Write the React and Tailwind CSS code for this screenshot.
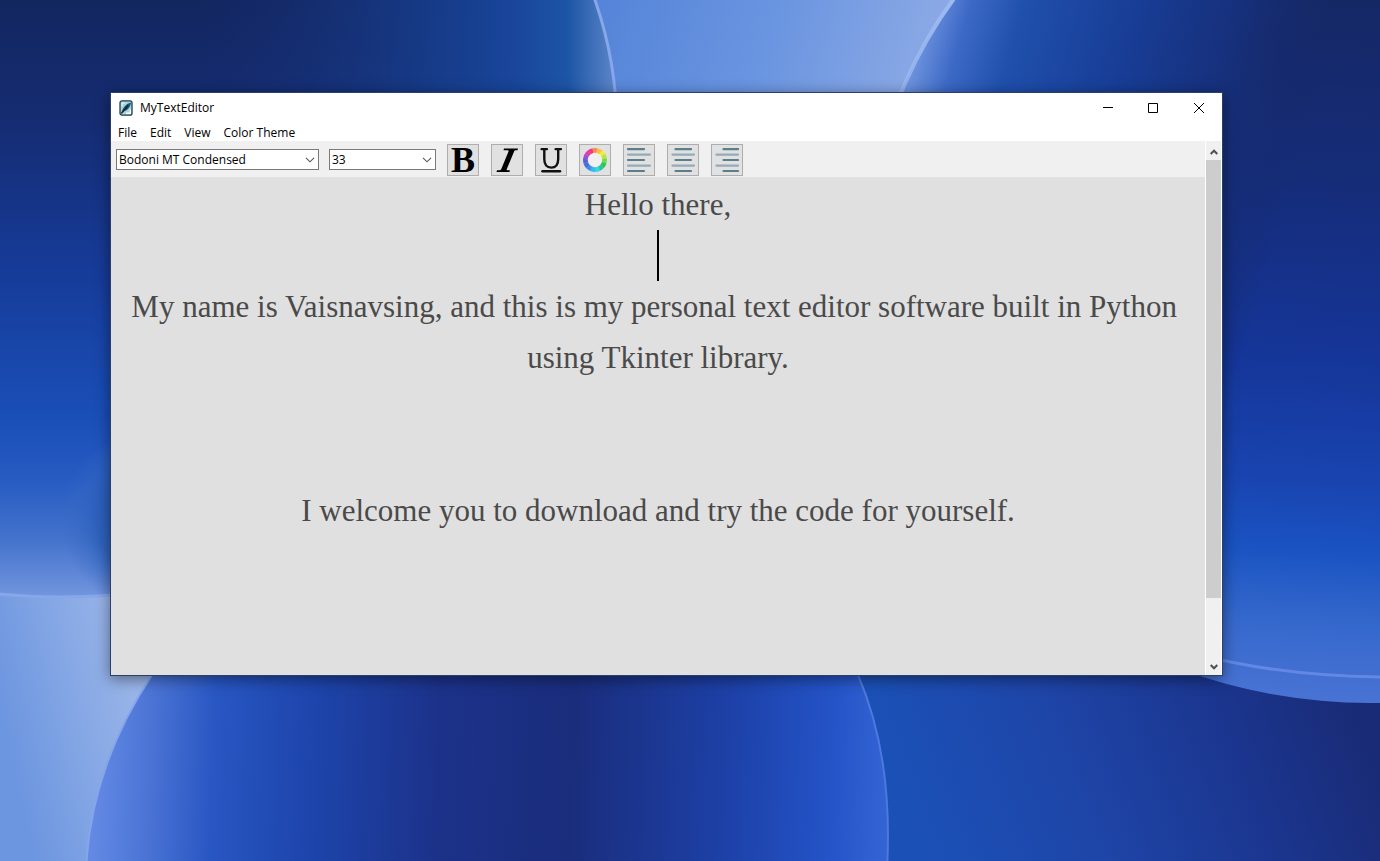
import { useState } from "react";

function Wallpaper() {
  return (
    <svg aria-hidden="true" className="absolute inset-0 h-full w-full" viewBox="0 0 1380 861" preserveAspectRatio="xMidYMid slice">
      <defs>
        <linearGradient id="sky" gradientUnits="userSpaceOnUse" x1="600" y1="0" x2="920" y2="100">
          <stop offset="0" stopColor="#5584d8" />
          <stop offset="0.5" stopColor="#6994e0" />
          <stop offset="1" stopColor="#8ba9e5" />
        </linearGradient>
        <linearGradient id="leftSky" gradientUnits="userSpaceOnUse" x1="0" y1="710" x2="130" y2="680">
          <stop offset="0" stopColor="#6c96e0" />
          <stop offset="1" stopColor="#98b4e8" />
        </linearGradient>
        <linearGradient id="ground" gradientUnits="userSpaceOnUse" x1="930" y1="850" x2="1350" y2="690">
          <stop offset="0" stopColor="#1b50b6" />
          <stop offset="0.35" stopColor="#1e45a8" />
          <stop offset="0.7" stopColor="#1b3690" />
          <stop offset="1" stopColor="#192b76" />
        </linearGradient>
        <linearGradient id="orbLeft" x1="0" y1="0" x2="0" y2="598" gradientUnits="userSpaceOnUse">
          <stop offset="0" stopColor="#12265f" />
          <stop offset="0.2" stopColor="#152c72" />
          <stop offset="0.45" stopColor="#163b98" />
          <stop offset="0.7" stopColor="#1a4fb8" />
          <stop offset="0.8" stopColor="#275bc2" />
          <stop offset="0.9" stopColor="#4372cc" />
          <stop offset="1" stopColor="#7396de" />
        </linearGradient>
        <linearGradient id="orbLeftSide" x1="200" y1="0" x2="618" y2="0" gradientUnits="userSpaceOnUse">
          <stop offset="0" stopColor="#182f76" stopOpacity="0" />
          <stop offset="0.5" stopColor="#163a86" stopOpacity="0.9" />
          <stop offset="0.75" stopColor="#19459a" />
          <stop offset="0.88" stopColor="#1d55a6" />
          <stop offset="1" stopColor="#6089cc" />
        </linearGradient>
        <radialGradient id="orbLeftShade" cx="150" cy="520" r="90" gradientUnits="userSpaceOnUse">
          <stop offset="0" stopColor="#2155ac" />
          <stop offset="0.6" stopColor="#2b5fba" stopOpacity="0.8" />
          <stop offset="1" stopColor="#3a6cc6" stopOpacity="0" />
        </radialGradient>
        <linearGradient id="orbRight" x1="1290" y1="0" x2="1250" y2="703" gradientUnits="userSpaceOnUse">
          <stop offset="0" stopColor="#152866" />
          <stop offset="0.25" stopColor="#152c78" />
          <stop offset="0.5" stopColor="#153598" />
          <stop offset="0.68" stopColor="#1944b0" />
          <stop offset="0.78" stopColor="#1a53c2" />
          <stop offset="0.88" stopColor="#3568cc" />
          <stop offset="1" stopColor="#4a74d4" />
        </linearGradient>
        <linearGradient id="orbRightSide" x1="920" y1="50" x2="1300" y2="160" gradientUnits="userSpaceOnUse">
          <stop offset="0" stopColor="#6a90dc" />
          <stop offset="0.09" stopColor="#3d69c6" />
          <stop offset="0.22" stopColor="#1f50ac" />
          <stop offset="0.5" stopColor="#183e98" stopOpacity="0.95" />
          <stop offset="0.75" stopColor="#173280" stopOpacity="0.8" />
          <stop offset="1" stopColor="#152866" stopOpacity="0" />
        </linearGradient>
        <linearGradient id="rimRight" x1="0" y1="0" x2="0" y2="400" gradientUnits="userSpaceOnUse">
          <stop offset="0" stopColor="#9dbaf2" />
          <stop offset="1" stopColor="#9dbaf2" stopOpacity="0" />
        </linearGradient>
        <linearGradient id="orbBottom" x1="95" y1="770" x2="888" y2="800" gradientUnits="userSpaceOnUse">
          <stop offset="0" stopColor="#6389e4" />
          <stop offset="0.07" stopColor="#4a73d4" />
          <stop offset="0.15" stopColor="#2856c2" />
          <stop offset="0.27" stopColor="#1d45ac" />
          <stop offset="0.43" stopColor="#1c328a" />
          <stop offset="0.6" stopColor="#1a2d7c" />
          <stop offset="0.8" stopColor="#1d41a8" />
          <stop offset="0.93" stopColor="#2454c8" />
          <stop offset="1" stopColor="#3464d4" />
        </linearGradient>
      </defs>
      <rect width="1380" height="861" fill="url(#sky)" />
      <rect y="560" width="400" height="301" fill="url(#leftSky)" />
      <rect x="700" y="560" width="680" height="301" fill="url(#ground)" />
      <ellipse cx="60" cy="130" rx="558" ry="468" fill="url(#orbLeft)" />
      <ellipse cx="60" cy="130" rx="558" ry="468" fill="url(#orbLeftShade)" />
      <ellipse cx="60" cy="130" rx="557" ry="467" fill="url(#orbLeftSide)" stroke="#86a7ea" strokeWidth="3" />
      <ellipse cx="1370" cy="250" rx="500" ry="453" fill="url(#orbRight)" />
      <path d="M1200 655Q1290 678 1400 677" fill="none" stroke="#6288e4" strokeWidth="3" />
      <ellipse cx="1370" cy="250" rx="500" ry="453" fill="url(#orbRightSide)" stroke="url(#rimRight)" strokeWidth="4" />
      <path d="M152 675C112 735 89 800 86 870H887C891 800 884 735 858 675L700 560H300Z" fill="url(#orbBottom)" />
      <path d="M858 675C884 735 891 800 887 870" fill="none" stroke="#4d78dc" strokeWidth="2" />
      <path d="M152 675C112 735 89 800 86 870" fill="none" stroke="#86a6ec" strokeWidth="2" />
    </svg>
  );
}

function AppIcon() {
  return (
    <svg aria-hidden="true" className="h-4 w-4" viewBox="0 0 16 16">
      <rect x="2" y="0.800" width="12" height="14.400" rx="2" fill="#a9d3da" stroke="#1f3f4c" strokeWidth="1.300" />
      <path d="M3.500 13C4.500 8 7.500 4 13 2.500C12.500 7 9.500 10.500 5.500 11.500Z" fill="#1d5273" />
      <path d="M3.300 13.500L10 5.500" stroke="#0c2431" strokeWidth="1.200" />
      <path d="M8 13.200H12.300V9.500" stroke="#ffffff" strokeWidth="1.400" fill="none" />
      <path d="M4 6.500V3H7.500" stroke="#e6f6f7" fill="none" />
    </svg>
  );
}

function Chevron({ className }) {
  return (
    <svg aria-hidden="true" className={className} viewBox="0 0 10 6" fill="none" stroke="#555555" strokeWidth="1.100">
      <path d="M1 0.800L5 4.800L9 0.800" />
    </svg>
  );
}

function ComboBox({ label, options, className }) {
  const [value, setValue] = useState(options[0]);
  return (
    <div className={`grid h-[21px] items-center border border-[#7a7a7a] bg-white ${className}`}>
      <select
        aria-label={label}
        value={value}
        onChange={(event) => setValue(event.target.value)}
        className="col-start-1 row-start-1 h-full w-full appearance-none bg-transparent pl-0.5 text-[12px] leading-none text-black outline-none"
      >
        {options.map((option) => (
          <option key={option}>{option}</option>
        ))}
      </select>
      <Chevron className="pointer-events-none col-start-1 row-start-1 mr-[3px] h-[6px] w-[10px] justify-self-end" />
    </div>
  );
}

function BoldIcon() {
  return (
    <span aria-hidden="true" className="font-['Liberation_Serif',serif] text-[36px] leading-[30px] font-bold text-black">B</span>
  );
}

function ItalicIcon() {
  return (
    <svg aria-hidden="true" className="h-[30px] w-[30px]" viewBox="0 0 30 30">
      <path d="M12 3.500H26L25.500 5.300H23.500Q22.600 5.300 22.200 6.300L14.800 24Q14.300 25.300 15.500 25.300H18L17.400 27H4.500L5 25.300H7.500Q8.700 25.300 9.300 24L16.500 6.500Q17 5.300 15.700 5.300H11.500Z" fill="#000" />
    </svg>
  );
}

function UnderlineIcon() {
  return (
    <svg aria-hidden="true" className="h-[30px] w-[30px]" viewBox="0 0 30 30" fill="none" stroke="#111" strokeLinecap="round">
      <path d="M5.500 4.200H11M19.500 4.200H25" strokeWidth="2.200" />
      <path d="M8.300 4.500V14C8.300 20 11 22.600 15.200 22.600C19.500 22.600 22.200 20 22.200 14V4.500" strokeWidth="2.400" />
      <path d="M6.500 26.300H24" strokeWidth="2.500" />
    </svg>
  );
}

const WHEEL = ["#f4ec3c", "#b9e53c", "#6fdc58", "#2fc653", "#2cc4a0", "#38d6e4", "#39b8f0", "#3f8fe8", "#4472dc", "#5a60d8", "#9a50d8", "#e03fb0", "#f03a7c", "#f98a5c", "#fbc23e"];

function ColorWheelIcon() {
  const step = 360 / WHEEL.length;
  const length = (2 * Math.PI * 9.6) / WHEEL.length;
  return (
    <svg aria-hidden="true" className="h-[30px] w-[30px]" viewBox="0 0 30 30" fill="none">
      <circle cx="15" cy="15" r="8" fill="#f0f0f0" />
      {WHEEL.map((color, index) => (
        <circle
          key={color}
          cx="15"
          cy="15"
          r="9.600"
          stroke={color}
          strokeWidth="4.800"
          strokeDasharray={`${length + 0.2} 100`}
          transform={`rotate(${index * step - 55} 15 15)`}
        />
      ))}
    </svg>
  );
}

const ALIGN_PATHS = {
  left: ["M4 4.200H20M4 15H20M4 26H20", "M4 9.600H26M4 20.600H26"],
  center: ["M7.500 4.200H23M7.500 15H23M7.500 26H23", "M4.500 9.600H26M4.500 20.600H26"],
  right: ["M11.500 4.200H26M11.500 15H26M11.500 26H26", "M4.500 9.600H26M4.500 20.600H26"],
};

function AlignIcon({ side }) {
  const [dark, light] = ALIGN_PATHS[side];
  return (
    <svg aria-hidden="true" className="h-[30px] w-[30px]" viewBox="0 0 30 30" strokeLinecap="round" strokeWidth="2.200">
      <path d={dark} stroke="#5b7d8c" />
      <path d={light} stroke="#92abb7" />
    </svg>
  );
}

function ToolButton({ label, children }) {
  return (
    <button type="button" aria-label={label} className="flex h-8 w-8 items-center justify-center border border-[#adadad] bg-[#e1e1e1]">
      {children}
    </button>
  );
}

function TitleBar() {
  return (
    <header className="flex h-[29px] items-center bg-white">
      <div className="flex flex-1 items-center gap-[6px] pl-[7px]">
        <AppIcon />
        <h1 className="text-[12px] leading-none">MyTextEditor</h1>
      </div>
      <div className="flex h-full">
        <button type="button" aria-label="Minimize" className="flex w-[45px] items-center justify-center">
          <svg className="h-[10px] w-[10px]" viewBox="0 0 10 10" stroke="#000"><path d="M0 4.500H10" /></svg>
        </button>
        <button type="button" aria-label="Maximize" className="flex w-[46px] items-center justify-center">
          <svg className="h-[10px] w-[10px]" viewBox="0 0 10 10" fill="none" stroke="#000"><path d="M0.500 0.500H9.500V9.500H0.500Z" /></svg>
        </button>
        <button type="button" aria-label="Close" className="flex w-[46px] items-center justify-center">
          <svg className="h-[10px] w-[10px]" viewBox="0 0 10 10" stroke="#000"><path d="M0 0L10 10M10 0L0 10" /></svg>
        </button>
      </div>
    </header>
  );
}

function ScrollArrow({ label, up }) {
  return (
    <button type="button" aria-label={label} className="flex h-[17px] shrink-0 items-center justify-center">
      <svg className="h-[6px] w-[8px]" viewBox="0 0 8 6" fill="none" stroke="#505050" strokeWidth="2">
        <path d={up ? "M0.700 5L4 1.700L7.300 5" : "M0.700 1L4 4.300L7.300 1"} />
      </svg>
    </button>
  );
}

const LINES = [
  "Hello there,",
  "",
  "My name is Vaisnavsing, and this is my personal text editor software built in Python using Tkinter library.",
  "",
  "",
  "I welcome you to download and try the code for yourself.",
];

export default function App() {
  return (
    <div className="relative flex min-h-screen overflow-hidden bg-[#1c459f] pt-[92px] pr-[157px] pb-[185px] pl-[110px] font-['Open_Sans','Noto_Sans',sans-serif] text-black">
      <Wallpaper />
      <div className="relative flex min-w-0 flex-1 flex-col border border-[#2b3f68] bg-[#e0e0e0] shadow-[0_3px_14px_rgba(0,0,0,0.45)]">
        <TitleBar />
        <nav aria-label="Menu bar" className="flex h-[19px] items-center gap-[13px] bg-white pt-[3px] pl-[7px] text-[12px] leading-none">
          {["File", "Edit", "View", "Color Theme"].map((item) => (
            <button key={item} type="button">{item}</button>
          ))}
        </nav>
        <div className="flex min-h-0 flex-1">
          <div className="flex min-w-0 flex-1 flex-col">
            <div role="toolbar" aria-label="Formatting" className="flex h-9 items-center gap-3 bg-[#f0f0f0] pt-px pl-[5px]">
              <div className="-mr-px flex gap-[10px]">
                <ComboBox label="Font family" options={["Bodoni MT Condensed", "Arial", "Times New Roman"]} className="w-[203px]" />
                <ComboBox label="Font size" options={["33", "12", "16", "24"]} className="w-[107px]" />
              </div>
              <ToolButton label="Bold"><BoldIcon /></ToolButton>
              <ToolButton label="Italic"><ItalicIcon /></ToolButton>
              <ToolButton label="Underline"><UnderlineIcon /></ToolButton>
              <ToolButton label="Font color"><ColorWheelIcon /></ToolButton>
              <ToolButton label="Align left"><AlignIcon side="left" /></ToolButton>
              <ToolButton label="Align center"><AlignIcon side="center" /></ToolButton>
              <ToolButton label="Align right"><AlignIcon side="right" /></ToolButton>
            </div>
            <main
              role="textbox"
              aria-label="Document"
              aria-multiline="true"
              className="flex-1 px-2 pt-[2px] text-center font-['Liberation_Serif',serif] text-[31px] leading-[51px] whitespace-break-spaces text-[#4a4a4a]"
            >
              {LINES.map((line, index) => (
                <p key={index} className="min-h-[51px]">
                  {index === 1 ? <span className="mx-auto block h-[51px] w-[2px] bg-black" /> : line}
                </p>
              ))}
            </main>
          </div>
          <div className="flex w-[17px] flex-col border-x border-white bg-[#f0f0f0] pt-[2px]">
            <ScrollArrow label="Scroll up" up />
            <div className="flex-1">
              <div className="h-[88%] bg-[#cdcdcd]" />
            </div>
            <ScrollArrow label="Scroll down" />
          </div>
        </div>
      </div>
    </div>
  );
}
